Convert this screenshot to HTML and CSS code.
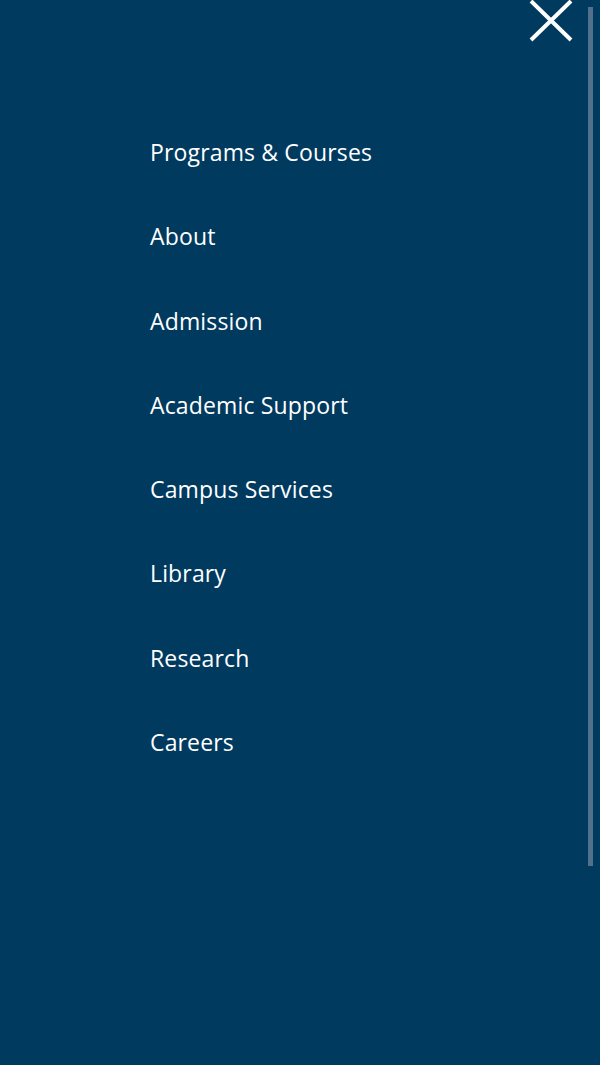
FILE: index.html
```html
<!DOCTYPE html>
<html>
<head>
<meta charset="utf-8">
<link rel="stylesheet" href="styles.css">
</head>
<body>
<div class="panel">
  <button class="close" aria-label="Close">
    <svg width="44" height="42" viewBox="0 0 44 42"><path d="M2 1 L42 40 M42 1 L2 40" stroke="#fff" stroke-width="4" fill="none"/></svg>
  </button>
  <nav class="menu">
    <a href="#">Programs &amp; Courses</a>
    <a href="#">About</a>
    <a href="#">Admission</a>
    <a href="#">Academic Support</a>
    <a href="#">Campus Services</a>
    <a href="#">Library</a>
    <a href="#">Research</a>
    <a href="#">Careers</a>
  </nav>
  <div class="scrollbar"></div>
</div>
</body>
</html>
```
FILE: styles.css
```css
html, body {
  margin: 0;
  padding: 0;
  height: 100%;
  background: #003a5f;
}
.panel {
  position: relative;
  height: 1065px;
  background: #003a5f;
  font-family: "Open Sans", "Noto Sans", sans-serif;
}
.close {
  position: absolute;
  top: 0;
  left: 529px;
  padding: 0;
  border: 0;
  background: none;
  line-height: 0;
}
.menu {
  display: flex;
  flex-direction: column;
  padding: 137px 0 0 150px;
}
.menu a {
  color: #fff;
  text-decoration: none;
  font-size: 23px;
  letter-spacing: 0.15px;
  line-height: 30px;
  height: 84.3px;
}
.scrollbar {
  position: absolute;
  left: 588px;
  top: 7px;
  width: 5px;
  height: 859px;
  background: #53708a;
}
```
